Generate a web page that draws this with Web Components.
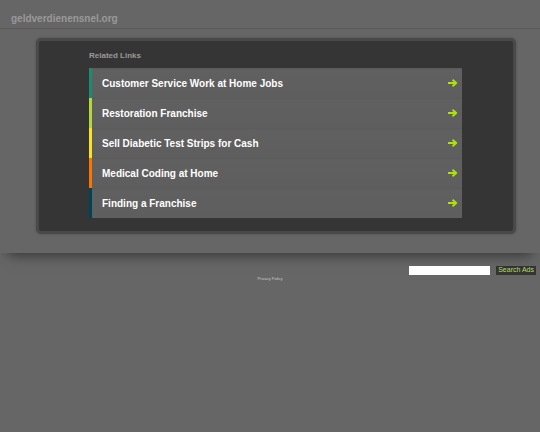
<!DOCTYPE html>
<html lang="en">
<head>
<meta charset="utf-8">
<title>geldverdienensnel.org</title>
<style>
html{background:#666}
body{margin:0;font-family:"Liberation Sans",Arial,sans-serif;color:#fff}
</style>
</head>
<body>
<parked-page></parked-page>
<script>
const define=(name,html)=>customElements.define(name,class extends HTMLElement{
  constructor(){
    super();
    const t=document.createElement('template');
    t.innerHTML=html;
    this.attachShadow({mode:'open'}).append(t.content.cloneNode(true));
  }
});

define('site-header',`<style>
:host{display:block;height:29px;box-sizing:border-box;padding:0 11px;border-bottom:1px solid #5a5a5a}
h1{margin:0;padding-top:12px;font-size:10px;line-height:14px;color:#999}
</style><h1><slot></slot></h1>`);

customElements.define('related-link',class extends HTMLElement{
  constructor(){
    super();
    this.attachShadow({mode:'open'}).innerHTML=`<style>
:host{display:block}
a{display:flex;align-items:center;height:30px;box-sizing:border-box;padding:0 4px 0 10px;border-left:3px solid var(--accent);background:linear-gradient(#5a5a5a,#606060 2px,#5e5e5e);color:#fff;font-weight:bold;font-size:10px;line-height:14px;text-decoration:none}
span{flex:1;padding-top:2px}
svg{width:10px;height:8px;display:block}
</style><a href="#"><span><slot></slot></span><svg viewBox="0 0 10 8" aria-hidden="true"><path d="M0 4H8M4.5 0.7L8.3 4L4.5 7.3" fill="none" stroke="#ade10c" stroke-width="1.8" stroke-linejoin="round"/></svg></a>`;
  }
});

define('link-panel',`<style>
:host{display:block;margin:9px 24px 0 36px;padding:9px 51px 13px 50px;background:#353535;border:3px solid #494949;border-radius:5px;box-shadow:0 0 3px #505050}
h2{margin:0 0 7px;font-size:8px;line-height:11px;color:#999}
</style><h2>Related Links</h2><nav><slot></slot></nav>`);

define('search-ads',`<style>
:host{display:block}
form{display:flex;justify-content:flex-end;gap:6px;padding-right:4px}
input{width:81px;height:9px;box-sizing:border-box;margin:0;padding:0 2px;border:0;background:#fff;color:#222;font:7px "Liberation Sans",Arial,sans-serif}
button{height:9px;margin:0;padding:0 2px 2px;border:0;background:#333;color:#b9dd6c;font:7px/7px "Liberation Sans",Arial,sans-serif}
</style><form><input type="text" aria-label="Search Ads"><button type="button">Search Ads</button></form>`);

define('page-footer',`<style>
:host{display:block;padding-top:1px;text-align:center;font-size:4px;line-height:5px}
a{color:#ccc}
</style><a href="#">Privacy Policy</a>`);

define('parked-page',`<style>
:host{display:block}
main{padding-bottom:19px;background:#666;box-shadow:0 10px 12px -8px #333}
search-ads{margin-top:13px}
</style>
<main>
<site-header>geldverdienensnel.org</site-header>
<link-panel>
<related-link style="--accent:#1c8c70">Customer Service Work at Home Jobs</related-link>
<related-link style="--accent:#b4d83c">Restoration Franchise</related-link>
<related-link style="--accent:#ffe11a">Sell Diabetic Test Strips for Cash</related-link>
<related-link style="--accent:#fd7400">Medical Coding at Home</related-link>
<related-link style="--accent:#004358">Finding a Franchise</related-link>
</link-panel>
</main>
<search-ads></search-ads>
<page-footer></page-footer>`);
</script>
</body>
</html>
